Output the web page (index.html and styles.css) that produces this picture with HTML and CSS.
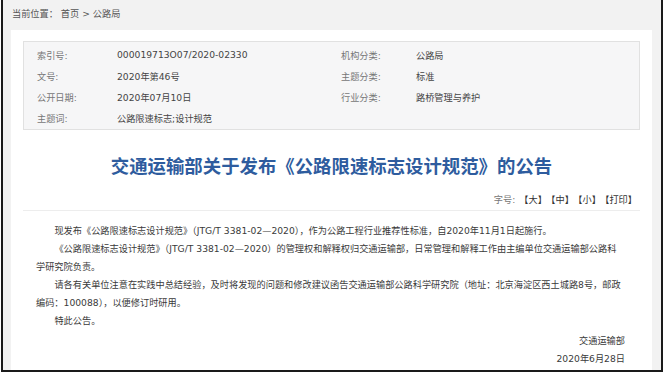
FILE: index.html
```html
<!DOCTYPE html>
<html lang="zh-CN">
<head>
  <meta charset="UTF-8" />
  <meta name="viewport" content="width=device-width, initial-scale=1" />
  <title>交通运输部关于发布《公路限速标志设计规范》的公告</title>
  <link rel="stylesheet" href="styles.css">
</head>
<body>

  <div class="frame">
    <div class="crumbs">当前位置： 首页 &gt; 公路局</div>

    <div class="panel">
      <div class="info-box">
        <span class="label">索引号:</span><span class="value">000019713O07/2020-02330</span>
        <span class="label">机构分类:</span><span class="value">公路局</span>

        <span class="label">文号:</span><span class="value">2020年第46号</span>
        <span class="label">主题分类:</span><span class="value">标准</span>

        <span class="label">公开日期:</span><span class="value">2020年07月10日</span>
        <span class="label">行业分类:</span><span class="value">路桥管理与养护</span>

        <span class="label">主题词:</span><span class="value">公路限速标志;设计规范</span>
        <span class="label"></span><span class="value"></span>
      </div>

      <h1 class="title">交通运输部关于发布《公路限速标志设计规范》的公告</h1>

      <div class="tools">
        字号:<span class="tool">【大】</span><span class="tool">【中】</span><span class="tool">【小】</span><span class="tool">【打印】</span>
      </div>

      <div class="article">
        <p>现发布《公路限速标志设计规范》（JTG/T 3381-02—2020），作为公路工程行业推荐性标准，自2020年11月1日起施行。</p>
        <p>《公路限速标志设计规范》（JTG/T 3381-02—2020）的管理权和解释权归交通运输部，日常管理和解释工作由主编单位交通运输部公路科学研究院负责。</p>
        <p>请各有关单位注意在实践中总结经验，及时将发现的问题和修改建议函告交通运输部公路科学研究院（地址：北京海淀区西土城路8号，邮政编码：100088），以便修订时研用。</p>
        <p>特此公告。</p>

        <div class="sign">
          <div>交通运输部</div>
          <div>2020年6月28日</div>
        </div>
      </div>
    </div>
  </div>

</body>
</html>
```

FILE: styles.css
```css
body {
  margin: 0;
  background: #fff;
  font-family: "DejaVu Sans", "Noto Sans CJK SC", sans-serif;
  font-size: 9.2px;
  color: #333;
}

.frame {
  box-sizing: border-box;
  height: 372px;
  margin: 0 1px;
  border: 2px solid #1a1a1a;
  border-top: 0;
  background: #f2f2f2;
  overflow: hidden;
}

.crumbs {
  height: 30px;
  line-height: 28px;
  padding-left: 9px;
  color: #555;
}

.panel {
  margin: 0 9px 0 8px;
  padding: 11px 12px 0;
  height: 400px;
  background: #fff;
}

.info-box {
  display: grid;
  grid-template-columns: 80px 224px 75px 1fr;
  grid-auto-rows: 21px;
  align-items: center;
  padding: 2px 13px 1px;
  background: #f6f6f7;
  border: 1px solid #e1e1e1;
}

.label {
  color: #777;
}

.value {
  color: #444;
}

.title {
  margin: 22px 0 0;
  font-family: "Noto Sans CJK SC", sans-serif;
  font-size: 18.4px;
  line-height: 26px;
  font-weight: bold;
  text-align: center;
  color: #2e5c9e;
}

.tools {
  margin-top: 14px;
  padding: 0 3px 2px 0;
  line-height: 16px;
  text-align: right;
  color: #777;
  border-bottom: 1px solid #ededed;
}

.tool {
  margin-left: 4px;
  color: #333;
}

.article {
  padding: 11px 15px 0 13px;
  line-height: 18px;
  color: #3a3a3a;
}

.article p {
  margin: 0;
  text-indent: 2em;
}

.sign {
  margin-top: 2px;
  text-align: right;
}
```
